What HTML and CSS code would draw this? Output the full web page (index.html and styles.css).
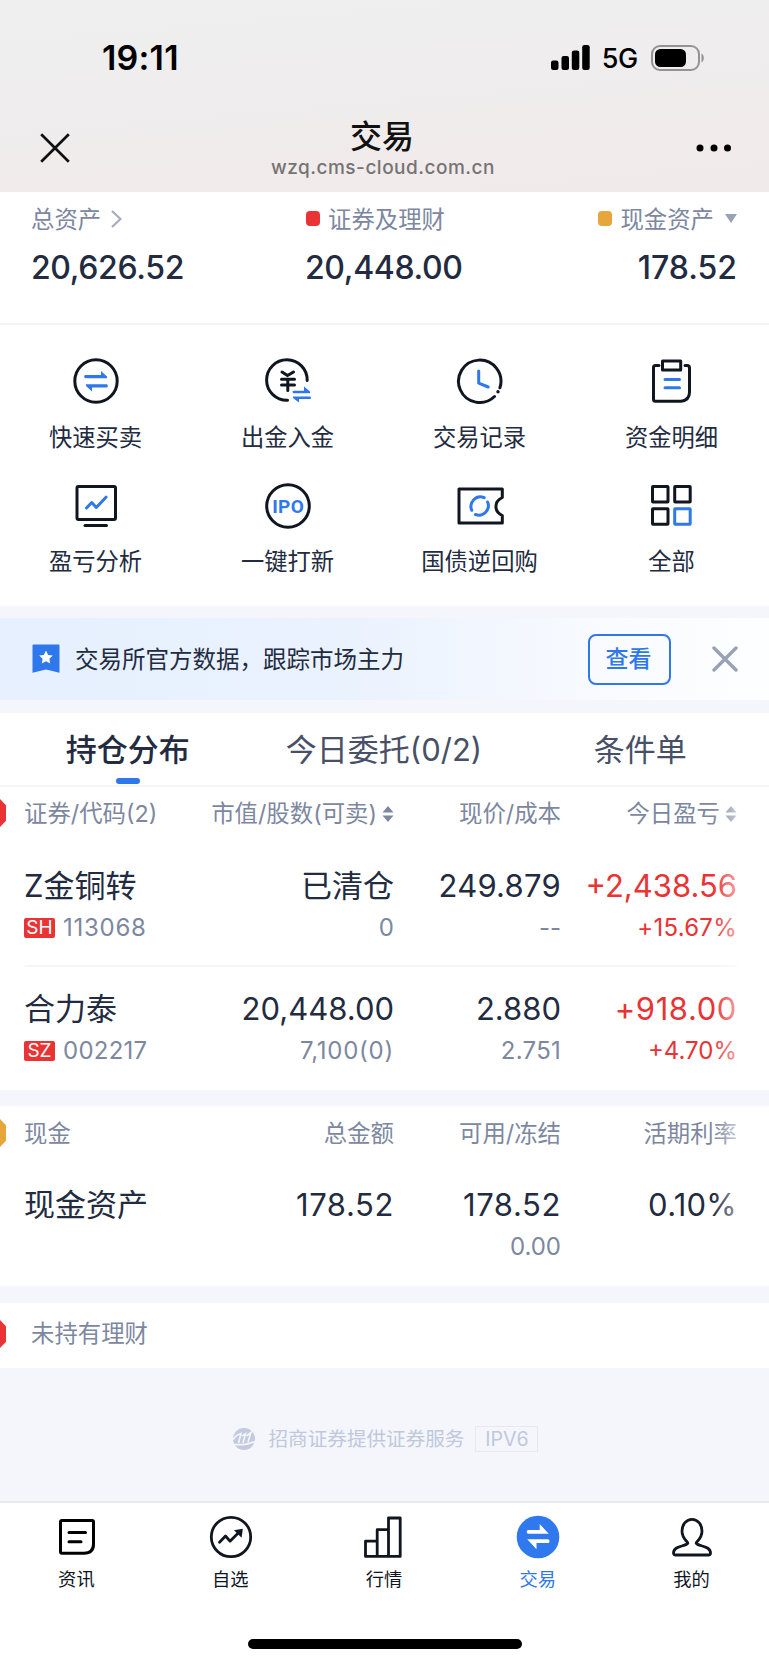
FILE: index.html
```html
<!DOCTYPE html>
<html lang="zh-CN">
<head>
<meta charset="utf-8">
<title>交易</title>
<link rel="stylesheet" href="styles.css">
</head>
<body>
<header class="top">
  <div class="status">
    <span class="clock">19:11</span>
    <div class="status-right">
      <svg width="39" height="25" viewBox="0 0 39 25"><rect x="0" y="15.500" width="7.500" height="9.500" rx="2.200"/><rect x="10.500" y="11" width="7.500" height="14" rx="2.200"/><rect x="20.800" y="5.500" width="7.500" height="19.500" rx="2.200"/><rect x="31.200" y="0" width="7.500" height="25" rx="2.200"/></svg>
      <span class="net">5G</span>
      <svg width="54" height="26" viewBox="0 0 54 26"><rect x="1" y="1" width="47" height="24" rx="8" fill="none" stroke="#939393" stroke-width="2"/><rect x="4" y="4" width="31" height="18" rx="5.500"/><path d="M50.500 8.500c3 1.500 3 7.500 0 9z" fill="#939393"/></svg>
    </div>
  </div>
  <div class="nav">
    <svg class="nav-close" width="30" height="30" viewBox="0 0 30 30" fill="none" stroke="#111" stroke-width="2.700"><path d="M1.200 1.200 28.800 28.800M28.800 1.200 1.200 28.800"/></svg>
    <div class="nav-title"><h1>交易</h1><p>wzq.cms-cloud.com.cn</p></div>
    <svg class="nav-more" width="36" height="8" viewBox="0 0 36 8"><circle cx="4" cy="4" r="3.500"/><circle cx="18" cy="4" r="3.500"/><circle cx="31.500" cy="4" r="3.500"/></svg>
  </div>
</header>

<section class="summary">
  <div class="sum s1"><div class="label">总资产<svg class="chev" width="11" height="18" viewBox="0 0 11 18" fill="none" stroke="#a3abbf" stroke-width="2.200"><path d="M1 1l8.500 8L1 17"/></svg></div><div class="value">20,626.52</div></div>
  <div class="sum s2"><div class="label"><i class="dot red"></i>证券及理财</div><div class="value">20,448.00</div></div>
  <div class="sum s3"><div class="label"><i class="dot gold"></i>现金资产<i class="caret"></i></div><div class="value">178.52</div></div>
</section>

<section class="tools">
  <div class="tool"><svg viewBox="0 0 48 48"><circle class="k" cx="24" cy="24" r="21.200"/><path class="bf" d="M13.500 18H29v-4l6 5.500v1.700H14a1.600 1.600 0 0 1-.5-3.200zM34.500 30.500H20v4L14 29v-1.700h20a1.600 1.600 0 0 1 .5 3.200z"/></svg><span>快速买卖</span></div>
  <div class="tool"><svg viewBox="0 0 48 48"><path class="k" d="M43.200 23.500A20.300 20.300 0 1 0 23.500 43.300"/><path class="k" d="M18 15l5.500 3.500L29.500 15M17.500 22.200h13M17.500 28h13M23.800 22v11.500"/><path class="bf" d="M29.500 33.800h10.500v-4.300l6 5v1.700H30a1.200 1.200 0 0 1-.5-2.400zM46 42H35v3.500l-6-4.500v-1.500h16.500a1.200 1.200 0 0 1 .5 2.500z"/></svg><span>出金入金</span></div>
  <div class="tool"><svg viewBox="0 0 48 48"><path class="k" d="M43.900 30.800A21.200 21.200 0 1 0 38.500 39.500"/><circle cx="42" cy="34.800" r="1.700" fill="#10161f"/><path class="b" d="M22.700 14v12.200l9.500 3.800"/></svg><span>交易记录</span></div>
  <div class="tool"><svg viewBox="0 0 48 48"><path class="k" d="M11 8.500H7.500a2 2 0 0 0-2 2v31.700a2 2 0 0 0 2 2H33q8.500-1 8.500-9V11a2.500 2.500 0 0 0-2.500-2.500h-2"/><path class="k" d="M14.500 4h18.200v9H14.500z"/><path class="b" d="M17 22.500h14.500M17 30.700h14.500"/></svg><span>资金明细</span></div>
  <div class="tool"><svg viewBox="0 0 48 48"><rect class="k" x="5" y="4.500" width="38.500" height="33" rx="1.500"/><path class="k" d="M13 43.500h21.500"/><path class="b" d="M14.500 26l5.200-5.500 4.600 5L34 15.200"/></svg><span>盈亏分析</span></div>
  <div class="tool"><svg viewBox="0 0 48 48"><circle class="k" cx="24" cy="24" r="21.300"/><text class="ipo" x="24" y="31" text-anchor="middle" textLength="31.500">IPO</text></svg><span>一键打新</span></div>
  <div class="tool"><svg viewBox="0 0 48 48"><path class="k" d="M46.300 15.500V7H3v34h43.300v-7.500c-8.500-4-8.500-14 0-18z"/><path class="b" d="M28.200 15.700A9.500 9.500 0 0 0 15.800 28.300M19.500 32.500A9.500 9.500 0 0 0 31.600 20"/></svg><span>国债逆回购</span></div>
  <div class="tool"><svg viewBox="0 0 48 48"><rect class="k" x="4.500" y="4.500" width="15.500" height="15.500" rx=".5"/><rect class="k" x="26.700" y="4.500" width="15.500" height="15.500" rx=".5"/><rect class="k" x="4.500" y="26.800" width="15.500" height="15.500" rx=".5"/><rect class="b" x="26.700" y="26.800" width="15.500" height="15.500" rx=".5"/></svg><span>全部</span></div>
</section>

<section class="banner">
  <svg width="28" height="30" viewBox="0 0 28 30"><path fill="#2f78ec" d="M1.500.5h25a1 1 0 0 1 1 1v27.300L14 25.500.5 28.800V1.500a1 1 0 0 1 1-1z"/><path fill="#fff" d="M14 6.500l2.100 4.400 4.700.6-3.400 3.300.8 4.800-4.200-2.300-4.200 2.300.8-4.800-3.400-3.300 4.700-.6z"/></svg>
  <p>交易所官方数据，跟踪市场主力</p>
  <button class="view">查看</button>
  <svg class="dismiss" width="26" height="26" viewBox="0 0 26 26" fill="none" stroke="#98a1b6" stroke-width="3.400" stroke-linecap="round"><path d="M2 2l22 22M24 2 2 24"/></svg>
</section>

<nav class="tabs">
  <span class="tab on">持仓分布</span><span class="tab">今日委托(0/2)</span><span class="tab">条件单</span>
</nav>

<section class="holdings fade">
  <i class="edge red"></i>
  <div class="row head"><span>证券/代码(2)</span><span>市值/股数(可卖)<svg class="sort" width="12" height="16" viewBox="0 0 12 16"><path d="M6 0l5.500 6.500H.5zM6 16 .5 9.500h11z"/></svg></span><span>现价/成本</span><span>今日盈亏<svg class="sort" width="12" height="16" viewBox="0 0 12 16"><path d="M6 0l5.500 6.500H.5zM6 16 .5 9.500h11z"/></svg></span></div>
  <div class="item">
    <div class="row main"><span>Z金铜转</span><span>已清仓</span><span class="num">249.879</span><span class="up">+2,438.56</span></div>
    <div class="row sub"><span class="wide"><b class="tag">SH</b>113068</span><span>0</span><span>--</span><span class="up num">+15.67%</span></div>
  </div>
  <div class="item">
    <div class="row main"><span>合力泰</span><span>20,448.00</span><span>2.880</span><span class="up wide">+918.00</span></div>
    <div class="row sub"><span class="num"><b class="tag">SZ</b>002217</span><span class="wide">7,100(0)</span><span class="num">2.751</span><span class="up">+4.70%</span></div>
  </div>
</section>

<section class="cash fade">
  <i class="edge gold"></i>
  <div class="row head"><span>现金</span><span>总金额</span><span>可用/冻结</span><span>活期利率</span></div>
  <div class="item">
    <div class="row main"><span>现金资产</span><span class="wide">178.52</span><span class="wide">178.52</span><span class="num">0.10%</span></div>
    <div class="row sub"><span></span><span></span><span>0.00</span><span></span></div>
  </div>
</section>

<section class="wealth"><i class="edge red"></i>未持有理财</section>

<div class="provider">
  <svg width="22" height="22" viewBox="0 0 22 22"><circle cx="11" cy="11" r="11" fill="#c3cade"/><g fill="none" stroke="#f4f6fb"><path stroke-width="1.600" d="M0 11.500C2 8.500 4.500 6.500 8 5.500L5.500 15M9 8 12.500 5.800 10 15M13.500 8 18 4.500 14.800 14.500"/><path stroke-width="1.700" d="M0 16.300c7 .8 14 .8 22-2.800"/></g></svg>
  <span>招商证券提供证券服务</span><em>IPV6</em>
</div>

<footer class="dock">
  <div class="dock-items">
    <div class="dock-item"><svg viewBox="0 0 44 44"><path class="n" d="M7 5.500h30a1.500 1.500 0 0 1 1.500 1.500v22q0 9.200-9.500 9.200H7a1.500 1.500 0 0 1-1.500-1.500V7A1.500 1.500 0 0 1 7 5.500zM14 17.400h16.500M14 26.800h12"/></svg><span>资讯</span></div>
    <div class="dock-item"><svg viewBox="0 0 44 44"><circle class="n t" cx="22" cy="22" r="19.700"/><path class="n t" d="M10.500 27.200l6-6.200 4.500 5.200 8-8"/><path d="M25 15.200l8.800-1.400-1.200 8.900z" fill="#10161f"/></svg><span>自选</span></div>
    <div class="dock-item"><svg viewBox="0 0 44 44"><path class="n t" d="M3.500 26.200h11.700v15.200H3.500zM15.200 14.700h11.300v26.700H15.200zM26.500 3h11.700v38.400H26.500z"/></svg><span>行情</span></div>
    <div class="dock-item active"><svg viewBox="0 0 44 44"><circle cx="22" cy="22" r="21.300" fill="#3078ee"/><path fill="#fff" d="M12.500 15h11.200V9l9 9.700H12.500a1.850 1.850 0 0 1 0-3.700zM31.700 28H20.500v6.200L11.200 24.300h20.500a1.850 1.850 0 0 1 0 3.700z"/></svg><span>交易</span></div>
    <div class="dock-item"><svg viewBox="0 0 44 44"><path class="n t" d="M17.800 28.300c.7-1.500-5.800-4-5.800-12.300 0-6.500 4.500-11.700 10-11.700S32 9.500 32 16c0 8.300-6.500 10.800-5.800 12.300 1.800 3.200 14.300 2 14.300 9.700 0 1.200-.8 2-2 2h-33c-1.200 0-2-.8-2-2 0-7.700 12.500-6.500 14.300-9.700z"/></svg><span>我的</span></div>
  </div>
  <div class="home"></div>
</footer>
</body>
</html>
```
FILE: styles.css
```css
* { box-sizing: border-box; }
body {
  margin: 0;
  width: 769px;
  height: 1665px;
  overflow: hidden;
  background: #f4f6fb;
  color: #222b40;
  font-family: Inter, "Noto Sans CJK SC", sans-serif;
  display: flex;
  flex-direction: column;
}
body > * { flex: none; }
h1, p { margin: 0; font-weight: 400; }
svg { display: block; flex: none; }
i, em { font-style: normal; }

.top { height: 192px; background: linear-gradient(175deg, #efeff0 0%, #efedee 48%, #f1ebeb 75%, #f0eaea 100%); }
.status { height: 114px; padding: 1px 64px 0 102px; display: flex; justify-content: space-between; align-items: center; color: #000; }
.clock { font-size: 34px; font-weight: 600; letter-spacing: .2px; }
.status-right { display: flex; align-items: center; }
.net { font-size: 27px; font-weight: 500; margin: 2px 13px 0 12px; letter-spacing: -.3px; }
.nav { height: 78px; padding: 0 37px 0 40px; display: flex; justify-content: space-between; align-items: flex-start; }
.nav-close { margin-top: 19px; }
.nav-more { margin-top: 30px; }
.nav-title { text-align: center; }
.nav-title h1 { font-size: 32px; line-height: 36px; font-weight: 500; color: #111; margin: 5px 2px 0 0; }
.nav-title p { font-size: 19px; line-height: 26px; font-weight: 500; color: #757374; letter-spacing: .5px; }

.summary { height: 133px; background: #fff; border-bottom: 2px solid #f5f5f7; padding: 12px 32px 0 31px; display: grid; grid-template-columns: 274px 1fr auto; }
.label { height: 28px; display: flex; align-items: center; font-size: 23.400px; color: #7d879f; }
.chev { margin-left: 10px; margin-top: 1px; }
.value { margin-top: 18px; line-height: 36px; font-size: 32px; font-weight: 500; letter-spacing: -.35px; }
.s3 { text-align: right; }
.s3 .value { letter-spacing: 0; }
.dot { width: 14px; height: 15px; border-radius: 4px; margin: 1px 8px 0 1px; }
.red { background: #e93335; }
.gold { background: #e6a63c; }
.caret { border: 6.500px solid transparent; border-top: 9px solid #98a1b6; border-bottom: 0; margin-left: 11px; }

.tools { height: 281px; background: #fff; padding-top: 32px; display: grid; grid-template-columns: repeat(4, 192px); grid-auto-rows: 124.500px; }
.tool { display: flex; flex-direction: column; align-items: center; }
.tool svg { width: 48px; height: 48px; }
.tool span { margin: 17.500px 1px 0 0; line-height: 30px; font-size: 23.300px; }
.k, .b { fill: none; stroke: #10161f; stroke-width: 3; stroke-linecap: round; stroke-linejoin: round; }
.b { stroke: #2f78ec; }
.bf { fill: #2f78ec; }
.ipo { font: 700 19px Roboto, sans-serif; fill: #2f78ec; }

.banner { margin-top: 12px; height: 82px; background: linear-gradient(90deg, #e6f0fe 0%, #eaf2fe 45%, #fbfcff 85%, #fdfeff 100%); padding: 0 31px 0 32px; display: flex; align-items: center; }
.banner p { margin: 1px 0 0 15px; font-size: 23.500px; line-height: 30px; flex: 1; white-space: nowrap; }
.view { width: 83px; height: 51px; border: 2px solid #2f78ec; border-radius: 8px; background: transparent; color: #2f78ec; font: 500 23px/30px Inter, "Noto Sans CJK SC", sans-serif; padding: 0 2px 1px 0; margin-right: 41px; }

.tabs { margin-top: 13px; height: 74px; background: #fff; border-bottom: 2px solid #f5f5f7; display: grid; grid-template-columns: repeat(3, 1fr); }
.tab { position: relative; text-align: center; font-size: 31px; line-height: 73px; padding-right: 1px; color: #475066; }
.on { font-weight: 500; color: #222b40; }
.on::after { content: ""; position: absolute; left: 116px; top: 65px; width: 24px; height: 6px; border-radius: 3px; background: #2f78ec; }

.holdings { height: 303px; }
.cash { height: 180px; margin-top: 16px; }
.holdings, .cash { position: relative; background: #fff; padding: 0 32px 0 24px; }
.fade::after { content: ""; position: absolute; top: 0; right: 0; bottom: 0; width: 56px; background: linear-gradient(90deg, #fff0, #fff9 48%, #fff 85%); }
.edge { position: absolute; left: 0; top: 12px; width: 6px; height: 28px; clip-path: polygon(0 0, 100% 22%, 100% 78%, 0 100%); }
.cash .edge { top: 13px; }
.row { display: grid; grid-template-columns: 150px 220px 167px 176px; text-align: right; white-space: nowrap; }
.row > :first-child { text-align: left; }
.head { height: 53px; line-height: 54px; font-size: 23.400px; color: #7d879f; }
.cash .head { line-height: 55px; }
.head span { display: flex; align-items: center; justify-content: flex-end; }
.head span:first-child { justify-content: flex-start; }
.sort { margin-left: 5px; fill: #7d879f; }
.item { height: 125px; padding-top: 24px; }
.item + .item { margin-left: 1px; border-top: 2px solid #f5f5f7; padding-top: 20px; }
.item + .item .row { margin-left: -1px; }
.main { height: 44px; font-size: 31px; line-height: 44px; }
.wide { letter-spacing: .6px; }
.num { letter-spacing: .25px; }
.sub { height: 40px; line-height: 39px; font-size: 24px; color: #7d879f; }
.sub .wide { letter-spacing: .75px; }
.up { color: #e93335; }
.tag { display: inline-block; width: 31px; height: 20px; margin-right: 8px; border-radius: 2px; background: #e93335; color: #fff; font-size: 19px; font-weight: 400; letter-spacing: 0; line-height: 20px; text-align: center; vertical-align: 2px; }

.wealth { position: relative; margin-top: 17px; height: 65px; background: #fff; padding-left: 31px; font-size: 23.400px; line-height: 62px; color: #7d879f; }
.wealth .edge { top: 17px; }
.provider { height: 133px; padding: 8px 0 0 2px; display: flex; justify-content: center; align-items: center; color: #c0c8dc; font-size: 19.600px; }
.provider span { margin: -2px 11px 0 14px; }
.provider em { width: 63px; height: 26px; border: 1px solid #e6e9f2; line-height: 24px; text-align: center; }

.dock { height: 164px; background: #fff; border-top: 2px solid #e9eaf0; color: #10161f; }
.dock-items { display: grid; grid-template-columns: repeat(5, 1fr); padding-top: 12px; height: 135px; }
.dock-item { display: flex; flex-direction: column; align-items: center; font-size: 18.300px; }
.dock-item svg { width: 44px; height: 44px; }
.dock-item span { margin: 8px 1px 0 0; line-height: 24px; }
.active { color: #2f78ec; }
.n { fill: none; stroke: #000; stroke-width: 3; stroke-linecap: round; stroke-linejoin: round; }
.t { stroke: #10161f; stroke-width: 2.800; }
.home { width: 274px; height: 10px; margin: 1px auto 0; border-radius: 5px; background: #000; }
```
